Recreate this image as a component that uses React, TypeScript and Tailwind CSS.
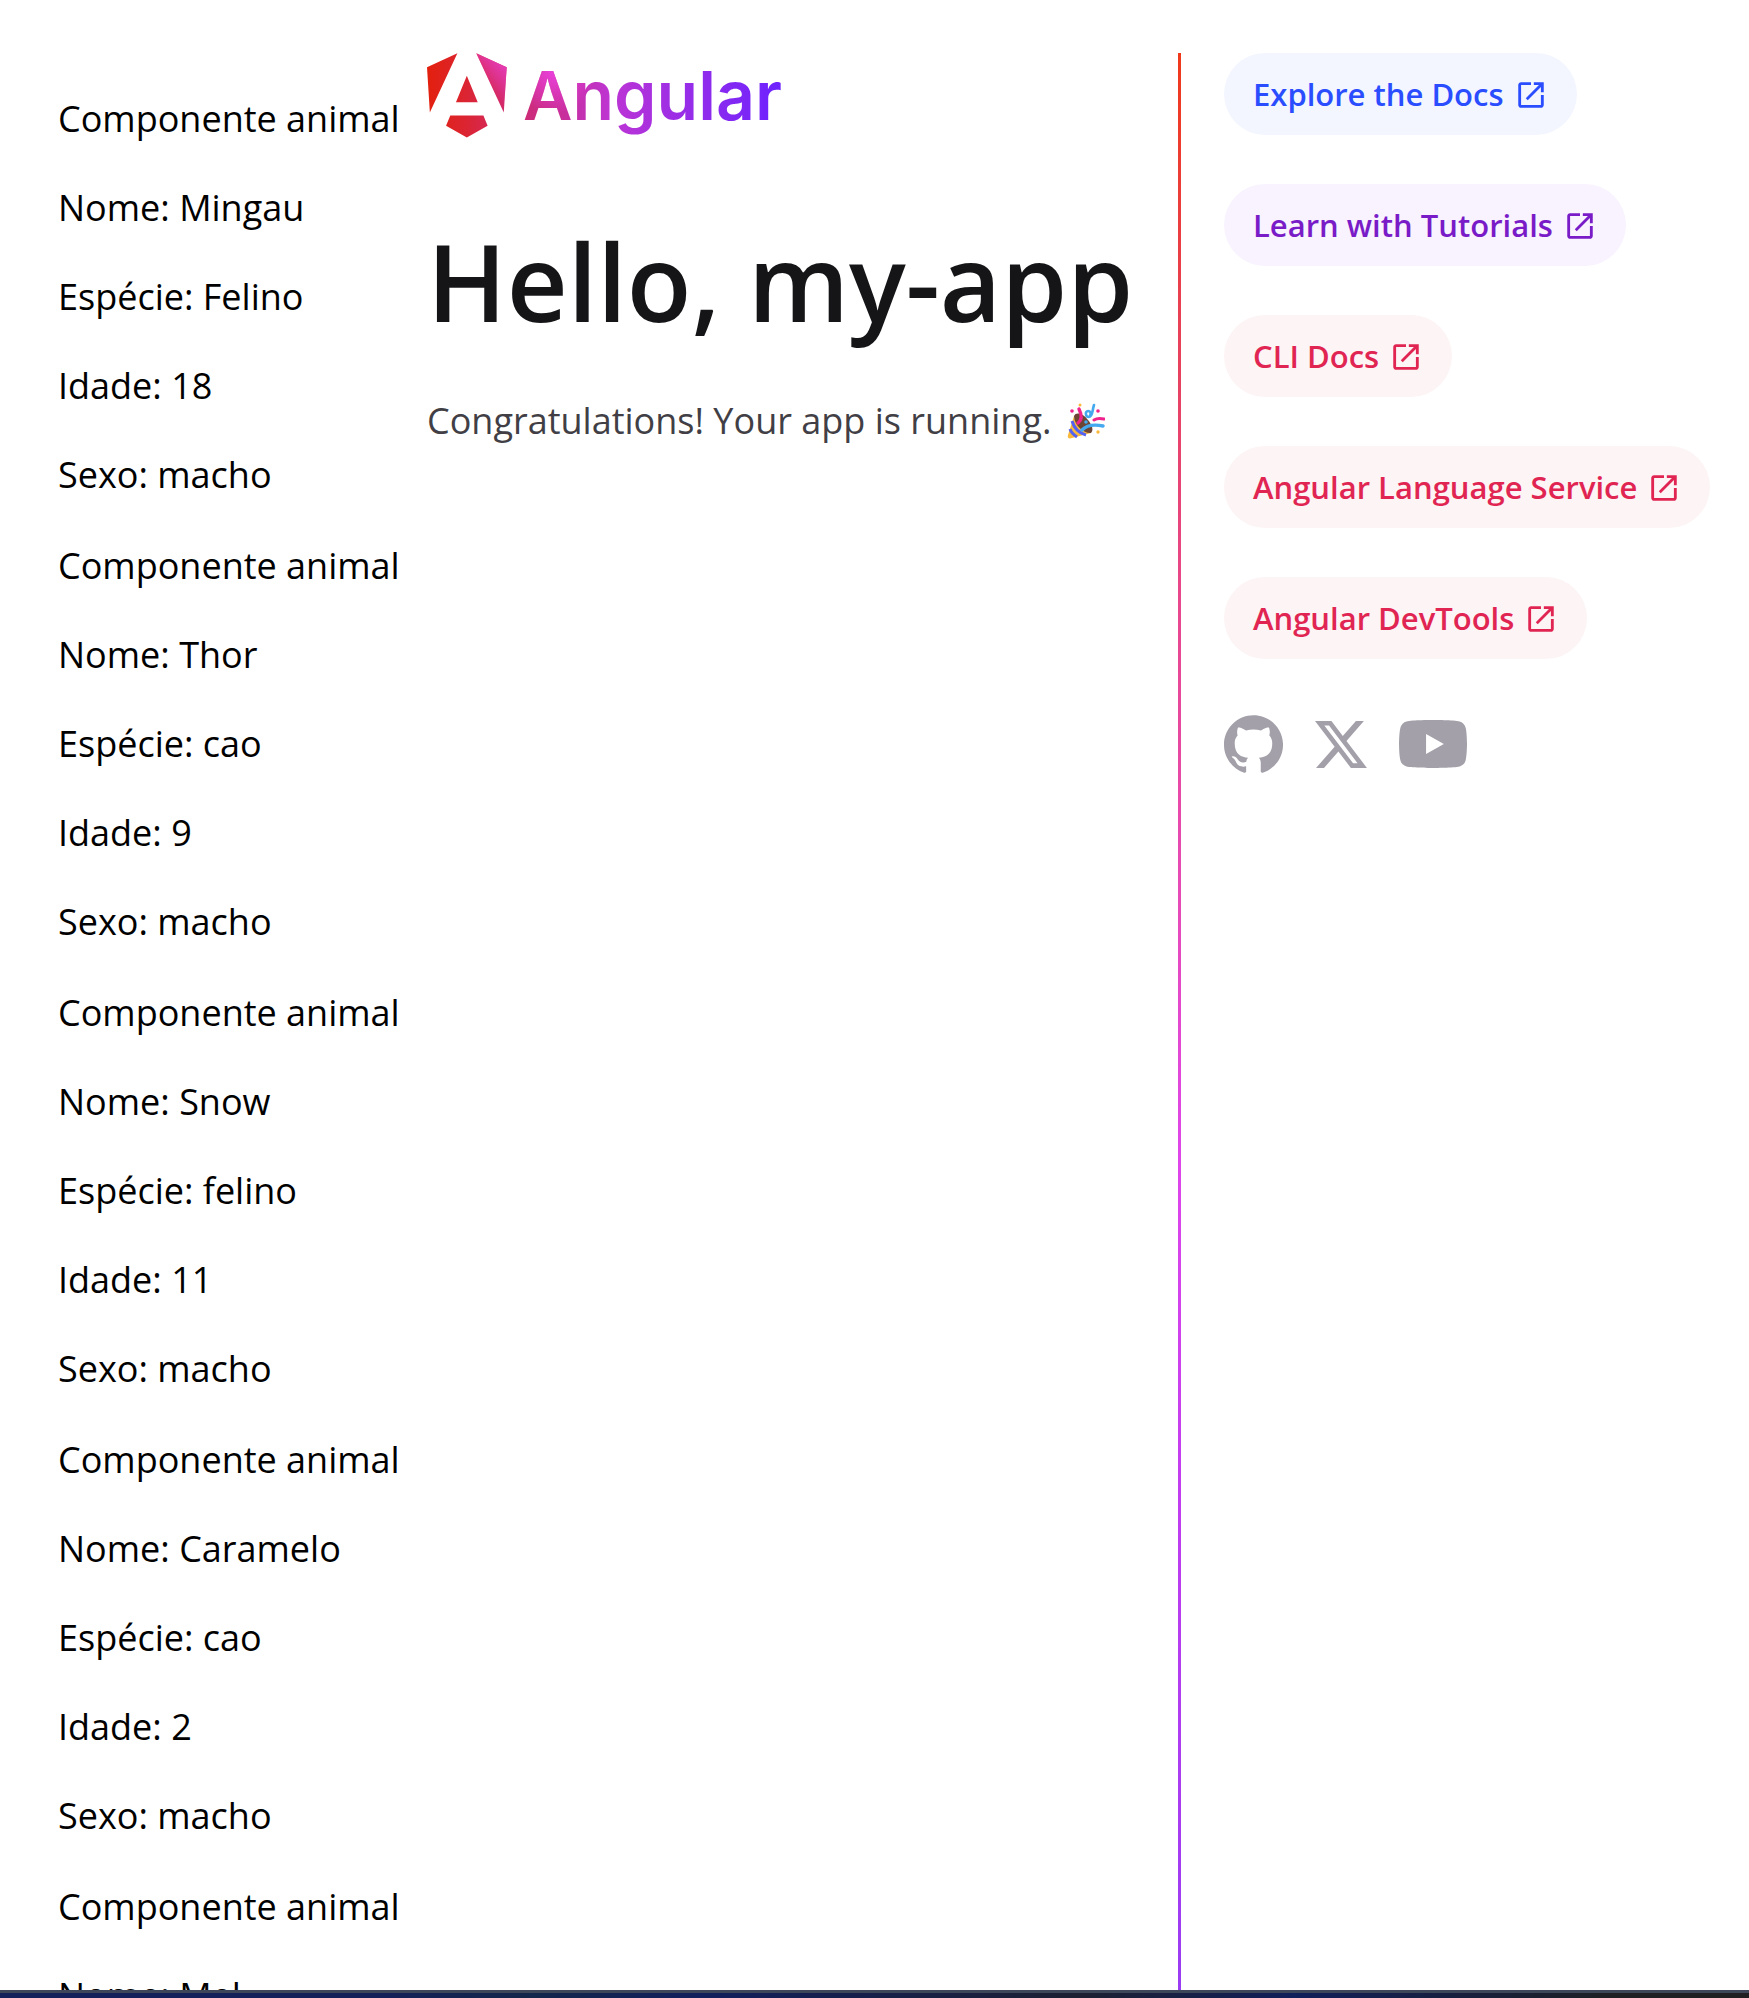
import type { ReactNode } from "react";

type Animal = { nome: string; especie: string; idade: number; sexo: string };

const animals: Animal[] = [
  { nome: "Mingau", especie: "Felino", idade: 18, sexo: "macho" },
  { nome: "Thor", especie: "cao", idade: 9, sexo: "macho" },
  { nome: "Snow", especie: "felino", idade: 11, sexo: "macho" },
  { nome: "Caramelo", especie: "cao", idade: 2, sexo: "macho" },
  { nome: "Mel", especie: "cao", idade: 5, sexo: "femea" },
];

const links = [
  { label: "Explore the Docs", style: "bg-[#f3f6ff] text-[#2a4dff]" },
  { label: "Learn with Tutorials", style: "bg-[#f8f3fe] text-[#7a1bc8]" },
  { label: "CLI Docs", style: "bg-[#fdf4f5] text-[#e12553]" },
  { label: "Angular Language Service", style: "bg-[#fdf4f5] text-[#e12553]" },
  { label: "Angular DevTools", style: "bg-[#fdf4f5] text-[#e12553]" },
];

function AnimalCard({ animal }: { animal: Animal }) {
  return (
    <section className="flex flex-col gap-[38px] text-4xl leading-[51px] whitespace-nowrap text-black">
      <p>Componente animal</p>
      <p>Nome: {animal.nome}</p>
      <p>Espécie: {animal.especie}</p>
      <p>Idade: {animal.idade}</p>
      <p>Sexo: {animal.sexo}</p>
    </section>
  );
}

function AngularMark() {
  return (
    <svg viewBox="0 0 223 236" className="h-[85px] w-20 shrink-0" aria-hidden="true">
      <defs>
        <linearGradient id="mark-red" x1="0" x2="223" y1="117" y2="117" gradientUnits="userSpaceOnUse">
          <stop stopColor="#e3200e" />
          <stop offset=".5" stopColor="#db2533" />
          <stop offset="1" stopColor="#d22a6e" />
        </linearGradient>
        <linearGradient id="mark-corner" x1="216" x2="160" y1="35" y2="95" gradientUnits="userSpaceOnUse">
          <stop stopColor="#e53bb4" />
          <stop offset="1" stopColor="#e53bb4" stopOpacity="0" />
        </linearGradient>
      </defs>
      <path
        fill="url(#mark-red)"
        d="m222.077 39.192-8.019 125.923L137.387 0l84.69 39.192Zm-53.105 162.825-57.933 33.056-57.934-33.056 11.783-28.556h92.301l11.783 28.556ZM111.039 62.675l30.357 73.803H80.681l30.358-73.803ZM7.937 165.115 0 39.192 84.69 0 7.937 165.115Z"
      />
      <path fill="url(#mark-corner)" d="m222.077 39.192-8.019 125.923L137.387 0l84.69 39.192Z" />
    </svg>
  );
}

function PartyPopper() {
  return (
    <svg viewBox="0 0 38 38" className="size-[38px] shrink-0" role="img" aria-label="Party popper" fill="none">
      <path d="M7 14 1 33c-1 3 1 4 4 3l19-5C17 30 8 22 7 14Z" fill="#fbb93b" />
      <path d="M5 19c2 7 7 12 14 14M3 27c1 3 4 6 7 8" stroke="#5460f0" strokeWidth="3" />
      <path d="M7 14c2-5 10-2 14 4 4 5 6 10 3 13-7 1-17-8-17-17Z" fill="#6d4534" />
      <path d="M11 21c4-3 4-8 1-14" stroke="#f0228c" strokeWidth="3.4" strokeLinecap="round" />
      <path d="M27 3c-2 6-1 11-5 12-4 0-4-6-1-6 3 0 3 3 2 5" stroke="#45a9ef" strokeWidth="2.6" strokeLinecap="round" />
      <circle cx="19" cy="20" r="1.8" fill="#45a9ef" />
      <path d="M15 28c4-4 11-6 21-4" stroke="#45a9ef" strokeWidth="3.4" strokeLinecap="round" />
      <path d="M27 18c3-2 6-2 10-1" stroke="#f0228c" strokeWidth="3" strokeLinecap="round" />
      <g fill="#f0228c">
        <circle cx="5" cy="9" r="1.8" />
        <circle cx="31" cy="9" r="1.8" />
      </g>
      <g fill="#fbb93b">
        <circle cx="13" cy="3" r="1.5" />
        <circle cx="31" cy="30" r="1.7" />
      </g>
    </svg>
  );
}

function OpenIcon() {
  return (
    <svg viewBox="0 -960 960 960" className="ml-2.5 size-[34px] shrink-0" fill="currentColor" aria-hidden="true">
      <path d="M200-120q-33 0-56.5-23.5T120-200v-560q0-33 23.5-56.5T200-840h280v80H200v560h560v-280h80v280q0 33-23.5 56.5T760-120H200Zm188-212-56-56 372-372H560v-80h280v280h-80v-144L388-332Z" />
    </svg>
  );
}

function SocialLink({ label, children }: { label: string; children: ReactNode }) {
  return (
    <a href="#" aria-label={label} className="text-[#a3a0a9]">
      {children}
    </a>
  );
}

export default function App() {
  return (
    <div className="flex h-screen flex-col overflow-hidden bg-white font-['Open_Sans',sans-serif]">
      <main className="flex min-h-0 flex-1 overflow-hidden pt-[53px] pr-[33px] pl-[58px]">
        <div className="mr-6 flex w-[345px] shrink-0 flex-col gap-10 pt-10">
          {animals.map((animal) => (
            <AnimalCard key={animal.nome} animal={animal} />
          ))}
        </div>

        <div className="min-w-0 flex-1">
          <div className="flex h-[85px] items-center gap-4">
            <AngularMark />
            <span className="bg-[radial-gradient(circle_at_12%_22%,#ea40dcff_0%,#ea40dc00_18%),linear-gradient(90deg,#cc2b74_0%,#c82f9c_16%,#bd35d4_34%,#9b2ee6_60%,#6c22ff_100%)] bg-clip-text font-['Inter',sans-serif] text-[68px] leading-[85px] font-semibold text-transparent">
              Angular
            </span>
          </div>
          <h1 className="mt-[84px] text-[106px] leading-[119px] font-semibold whitespace-nowrap text-[#151417]">
            Hello, my-app
          </h1>
          <p className="mt-[54px] flex items-center gap-4 text-4xl leading-[51px] whitespace-nowrap text-[#413f45]">
            Congratulations! Your app is running.
            <PartyPopper />
          </p>
        </div>

        <div
          role="separator"
          className="mr-[43px] w-[3px] shrink-0 bg-[linear-gradient(180deg,#f0391b_0%,#e8415a_15%,#e8488f_29%,#e74bb8_44%,#df46ea_57%,#c13df0_75%,#9a3cf2_100%)]"
        />

        <div className="flex w-[492px] shrink-0 flex-col items-start">
          <nav className="flex flex-col items-start gap-[49px]">
            {links.map(({ label, style }) => (
              <a
                key={label}
                href="#"
                className={`flex items-center rounded-full px-[29px] pt-[17px] pb-4 text-[31px] leading-[49px] font-semibold whitespace-nowrap ${style}`}
              >
                {label}
                <OpenIcon />
              </a>
            ))}
          </nav>
          <div className="mt-14 flex items-center gap-8">
            <SocialLink label="Github">
              <svg viewBox="0 0 24.6 24" className="h-[58px] w-[59px]" fill="currentColor" aria-hidden="true">
                <path d="M12.3047 0C5.50634 0 0 5.50942 0 12.3047C0 17.7423 3.52529 22.3535 8.41332 23.9787C9.02856 24.0946 9.25414 23.7142 9.25414 23.3871C9.25414 23.0949 9.24389 22.3207 9.23876 21.2953C5.81601 22.0377 5.09414 19.6444 5.09414 19.6444C4.53427 18.2243 3.72524 17.8449 3.72524 17.8449C2.61064 17.082 3.81137 17.0973 3.81137 17.0973C5.04697 17.1835 5.69604 18.3647 5.69604 18.3647C6.79321 20.2463 8.57636 19.7029 9.27978 19.3881C9.39052 18.5924 9.70736 18.0499 10.0591 17.7423C7.32641 17.4347 4.45429 16.3765 4.45429 11.6618C4.45429 10.3185 4.9311 9.22133 5.72065 8.36C5.58222 8.04931 5.16694 6.79833 5.82831 5.10337C5.82831 5.10337 6.85883 4.77319 9.2121 6.36459C10.1965 6.09082 11.2424 5.95546 12.2883 5.94931C13.3342 5.95546 14.3801 6.09082 15.3644 6.36459C17.7023 4.77319 18.7328 5.10337 18.7328 5.10337C19.3942 6.79833 18.9789 8.04931 18.8559 8.36C19.6403 9.22133 20.1171 10.3185 20.1171 11.6618C20.1171 16.3888 17.2409 17.4296 14.5031 17.7321C14.9338 18.1012 15.3337 18.8559 15.3337 20.0084C15.3337 21.6552 15.3183 22.978 15.3183 23.3779C15.3183 23.7009 15.5336 24.0854 16.1642 23.9623C21.0871 22.3484 24.6094 17.7341 24.6094 12.3047C24.6094 5.50942 19.0999 0 12.3047 0Z" />
              </svg>
            </SocialLink>
            <SocialLink label="Twitter">
              <svg viewBox="1.25 2.25 21.6 19.5" className="h-[47px] w-[52px]" fill="currentColor" aria-hidden="true">
                <path d="M18.244 2.25h3.308l-7.227 8.26 8.502 11.24H16.17l-5.214-6.817L4.99 21.75H1.68l7.73-8.835L1.254 2.25H8.08l4.713 6.231zm-1.161 17.52h1.833L7.084 4.126H5.117z" />
              </svg>
            </SocialLink>
            <SocialLink label="Youtube">
              <svg viewBox="0.6 0 28.4 20" className="h-12 w-[68px]" fill="currentColor" aria-hidden="true">
                <path d="M27.4896 1.52422C27.9301 1.96749 28.2463 2.51866 28.4068 3.12258C29.0004 5.35161 29.0004 10 29.0004 10C29.0004 10 29.0004 14.6484 28.4068 16.8774C28.2463 17.4813 27.9301 18.0325 27.4896 18.4758C27.0492 18.9191 26.5 19.2389 25.8972 19.4032C23.6778 20 14.8068 20 14.8068 20C14.8068 20 5.93586 20 3.71651 19.4032C3.11363 19.2389 2.56449 18.9191 2.12405 18.4758C1.68361 18.0325 1.36732 17.4813 1.20683 16.8774C0.613281 14.6484 0.613281 10 0.613281 10C0.613281 10 0.613281 5.35161 1.20683 3.12258C1.36732 2.51866 1.68361 1.96749 2.12405 1.52422C2.56449 1.08095 3.11363 0.76113 3.71651 0.596774C5.93586 0 14.8068 0 14.8068 0C14.8068 0 23.6778 0 25.8972 0.596774C26.5 0.76113 27.0492 1.08095 27.4896 1.52422ZM11.9036 14.221L19.3229 10L11.9036 5.77905V14.221Z" />
              </svg>
            </SocialLink>
          </div>
        </div>
      </main>
      <footer className="h-2 shrink-0 border-t-3 border-[#3e465a] bg-[linear-gradient(90deg,#14205a_0%,#142058_22%,#13264a_30%,#111f5c_40%,#1d2032_62%,#111f5a_74%,#1e2024_92%,#202022_100%)]" />
    </div>
  );
}
